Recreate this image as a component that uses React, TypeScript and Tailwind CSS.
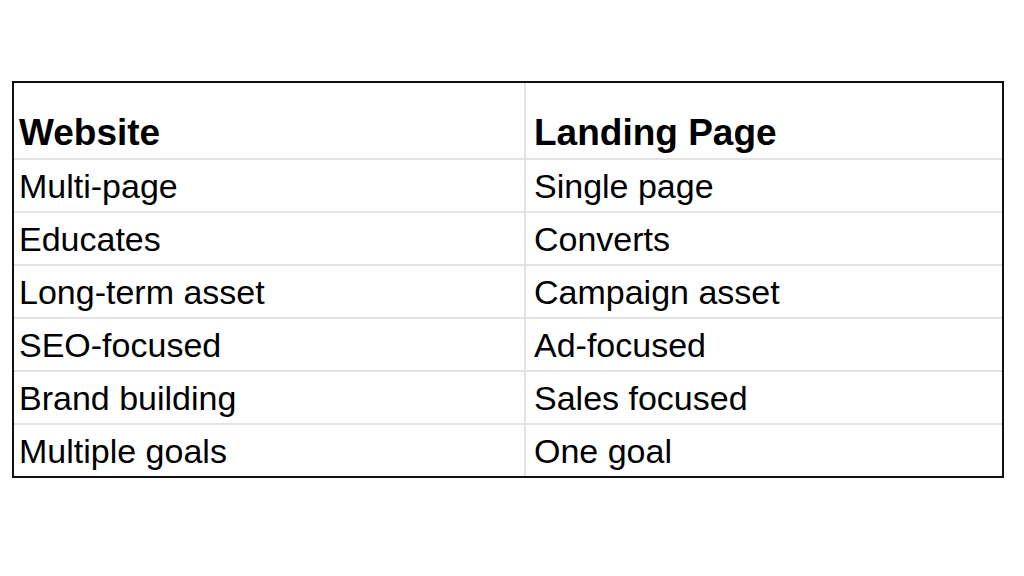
import React from 'react';

const rows: [string, string][] = [
  ['Multi-page', 'Single page'],
  ['Educates', 'Converts'],
  ['Long-term asset', 'Campaign asset'],
  ['SEO-focused', 'Ad-focused'],
  ['Brand building', 'Sales focused'],
  ['Multiple goals', 'One goal'],
];

export default function App() {
  return (
    <div
      className="w-[1024px] h-[576px] bg-white pt-[81px] pl-[12px]"
      style={{ fontFamily: '"Liberation Sans", Arial, sans-serif' }}
    >
      <div className="w-[992px] border-2 border-[#111] flex flex-col text-black">
        <div className="h-[77px] flex border-b-2 border-[#e3e3e3]">
          <div className="w-[512px] border-r-2 border-[#e3e3e3] flex items-end pl-[5px] pb-[6px] text-[37px] leading-[38px] font-bold">
            Website
          </div>
          <div className="flex-1 flex items-end pl-[8px] pb-[6px] text-[37px] leading-[38px] font-bold">
            Landing Page
          </div>
        </div>
        {rows.map(([a, b], i) => (
          <div
            key={a}
            className={
              i < rows.length - 1
                ? 'h-[53px] flex border-b-2 border-[#e3e3e3]'
                : 'h-[51px] flex'
            }
          >
            <div className="w-[512px] border-r-2 border-[#e3e3e3] flex items-end pl-[5px] pb-[6px] text-[34px] leading-[38px]">
              {a}
            </div>
            <div className="flex-1 flex items-end pl-[8px] pb-[6px] text-[34px] leading-[38px]">
              {b}
            </div>
          </div>
        ))}
      </div>
    </div>
  );
}
